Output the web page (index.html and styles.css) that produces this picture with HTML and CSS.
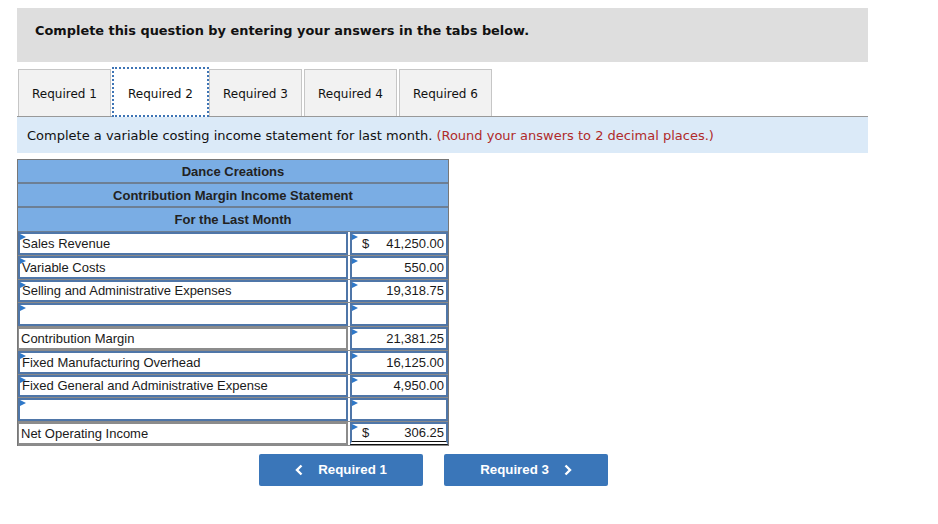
FILE: index.html
```html
<!DOCTYPE html>
<html>
<head>
<meta charset="utf-8">
<link rel="stylesheet" href="styles.css">
</head>
<body>
<div class="page">
  <div class="instruct">Complete this question by entering your answers in the tabs below.</div>
  <div class="tabs">
    <div class="tab">Required 1</div>
    <div class="tab active">Required 2</div>
    <div class="tab">Required 3</div>
    <div class="tab">Required 4</div>
    <div class="tab">Required 6</div>
  </div>
  <div class="info">Complete a variable costing income statement for last month. <span class="red">(Round your answers to 2 decimal places.)</span></div>

  <div class="stmt">
    <div class="hrow">Dance Creations</div>
    <div class="hrow">Contribution Margin Income Statement</div>
    <div class="hrow last">For the Last Month</div>

    <div class="row">
      <div class="cell label input">Sales Revenue</div>
      <div class="cell amt input"><span class="cur">$</span><span>41,250.00</span></div>
    </div>
    <div class="row">
      <div class="cell label input">Variable Costs</div>
      <div class="cell amt input"><span></span><span>550.00</span></div>
    </div>
    <div class="row">
      <div class="cell label input">Selling and Administrative Expenses</div>
      <div class="cell amt input"><span></span><span>19,318.75</span></div>
    </div>
    <div class="row">
      <div class="cell label input"></div>
      <div class="cell amt input"><span></span><span></span></div>
    </div>
    <div class="row">
      <div class="cell label static">Contribution Margin</div>
      <div class="cell amt input"><span></span><span>21,381.25</span></div>
    </div>
    <div class="row">
      <div class="cell label input">Fixed Manufacturing Overhead</div>
      <div class="cell amt input"><span></span><span>16,125.00</span></div>
    </div>
    <div class="row">
      <div class="cell label input">Fixed General and Administrative Expense</div>
      <div class="cell amt input"><span></span><span>4,950.00</span></div>
    </div>
    <div class="row">
      <div class="cell label input"></div>
      <div class="cell amt input"><span></span><span></span></div>
    </div>
    <div class="row final">
      <div class="cell label static">Net Operating Income</div>
      <div class="cell amt input dbl"><span class="cur">$</span><span>306.25</span></div>
    </div>
  </div>

  <div class="nav">
    <div class="btn"><svg class="chev left" width="8" height="12" viewBox="0 0 8 12"><polyline points="6.5,1.5 2,6 6.5,10.5" fill="none" stroke="#fff" stroke-width="2.4"/></svg>Required 1</div>
    <div class="btn">Required 3<svg class="chev right" width="8" height="12" viewBox="0 0 8 12"><polyline points="1.5,1.5 6,6 1.5,10.5" fill="none" stroke="#fff" stroke-width="2.4"/></svg></div>
  </div>
</div>
</body>
</html>
```

FILE: styles.css
```css
* { box-sizing: border-box; }
body {
  margin: 0;
  background: #fff;
  font-family: "DejaVu Sans", Verdana, sans-serif;
  color: #111;
}
.page {
  padding: 8px 0 0 17px;
  width: 868px;
}
.instruct {
  background: #dedede;
  height: 54px;
  padding: 15px 0 0 18px;
  font-weight: bold;
  font-size: 12.9px;
  color: #111;
}
.tabs {
  display: flex;
  align-items: flex-end;
  margin-top: 7px;
  padding-left: 1px;
  gap: 2px;
  border-bottom: 1px solid #999;
  height: 48px;
}
.tab {
  height: 47px;
  width: 93px;
  border: 1px solid #c6c6c6;
  border-bottom: none;
  background: #f2f2f2;
  font-size: 12px;
  padding-top: 2px;
  display: flex;
  align-items: center;
  justify-content: center;
  color: #111;
}
.tab.active {
  background: #fff;
  border: 2px dotted #3d74b5;
  height: 50px;
  width: 97px;
  margin: 0 -2px -1px -1px;
  padding-top: 4px;
  position: relative;
}
.info {
  background: #dbeaf8;
  height: 36px;
  padding-left: 10px;
  display: flex;
  align-items: center;
  font-size: 13px;
  color: #111;
}
.red { color: #b02a2a; margin-left: 4px; }

.stmt {
  margin-top: 6px;
  width: 432px;
  border: 1px solid #777;
  border-bottom: none;
  font-family: "Liberation Sans", Arial, sans-serif;
  font-size: 13px;
}
.hrow {
  background: #7aade4;
  height: 24px;
  display: flex;
  align-items: center;
  justify-content: center;
  font-weight: bold;
  color: #222;
  border-bottom: 2px solid #6d7f94;
}
.hrow.last { border-bottom: 1px solid #6d7f94; }
.row {
  display: flex;
  gap: 2px;
  height: 23.75px;
  border-bottom: 1px solid #8a8a8a;
}
.cell {
  position: relative;
  height: 100%;
  display: flex;
  align-items: center;
  color: #1a1a1a;
  background: #fff;
}
.label {
  width: 330px;
  padding-left: 2px;
}
.amt {
  width: 98px;
  justify-content: space-between;
  padding: 0 2px 0 10px;
}
.input { border: 2px solid #4f76a8; }
.static { border: 2px solid #8c8c8c; border-left: 1px solid #8c8c8c; }
.input::before {
  content: "";
  position: absolute;
  left: 0;
  top: 0;
  border-top: 3px solid transparent;
  border-bottom: 3px solid transparent;
  border-left: 6px solid #2f78c8;
}
.dbl { border-bottom: 4px double #111; }

.nav {
  display: flex;
  gap: 21px;
  margin: 8px 0 0 242px;
}
.btn {
  width: 164px;
  height: 32px;
  background: #3a76b9;
  border-radius: 2px;
  color: #fff;
  font-family: "Liberation Sans", Arial, sans-serif;
  font-weight: bold;
  font-size: 13.3px;
  display: flex;
  align-items: center;
  justify-content: center;
}
.chev.left { margin-right: 15px; }
.chev.right { margin-left: 15px; }
```
